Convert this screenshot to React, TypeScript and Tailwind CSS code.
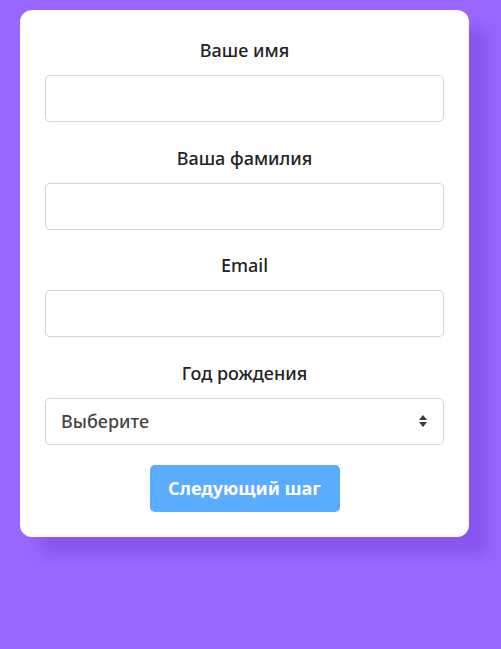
import { useState } from "react";

const fields = [
    { id: "name", label: "Ваше имя", type: "text" },
    { id: "surname", label: "Ваша фамилия", type: "text" },
    { id: "email", label: "Email", type: "email" },
];

export default function App() {
    const [year, setYear] = useState("");

    return (
        <main
            className="min-h-[649px] w-full bg-[#9966ff] pt-[10px] pl-[20px]"
            style={{ fontFamily: '"Noto Sans", "DejaVu Sans", sans-serif' }}
        >
            <form className="w-[449px] rounded-[12px] bg-white px-[25px] pt-[26px] pb-[25px] shadow-[20px_18px_12px_rgba(100,50,200,0.3)]">
                {fields.map((field, i) => (
                    <div key={field.id} className={`flex flex-col ${i === 1 ? "mb-[21px]" : "mb-[22px]"}`}>
                        <label
                            htmlFor={field.id}
                            className="mb-[11px] h-[28px] text-center text-[18px] leading-[28px] font-medium text-[#222]"
                        >
                            {field.label}
                        </label>
                        <input
                            id={field.id}
                            type={field.type}
                            className="h-[47px] rounded-[5px] border border-[#ced4da] px-4 text-[17px] outline-none"
                        />
                    </div>
                ))}

                <div className="flex flex-col">
                    <label
                        htmlFor="year"
                        className="mb-[11px] h-[28px] text-center text-[18px] leading-[28px] font-medium text-[#222]"
                    >
                        Год рождения
                    </label>
                    <div className="relative">
                        <select
                            id="year"
                            value={year}
                            onChange={(e) => setYear(e.target.value)}
                            className="h-[47px] w-full appearance-none rounded-[5px] border border-[#ced4da] bg-white px-[15px] text-[18px] font-medium text-[#444] outline-none"
                        >
                            <option value="">Выберите</option>
                            <option value="2000">2000</option>
                            <option value="1999">1999</option>
                        </select>
                        <svg
                            className="pointer-events-none absolute top-[16px] right-[16px]"
                            width="10"
                            height="14"
                            viewBox="0 0 10 14"
                        >
                            <path d="M5 1 L9 6 H1 Z" fill="#343a40" />
                            <path d="M5 13 L9 8 H1 Z" fill="#343a40" />
                        </svg>
                    </div>
                </div>

                <div className="mt-[20px] flex justify-center">
                    <button
                        type="button"
                        className="h-[47px] w-[190px] rounded-[5px] bg-[#5aacff] text-[18px] font-bold text-white"
                    >
                        Следующий шаг
                    </button>
                </div>
            </form>
        </main>
    );
}
